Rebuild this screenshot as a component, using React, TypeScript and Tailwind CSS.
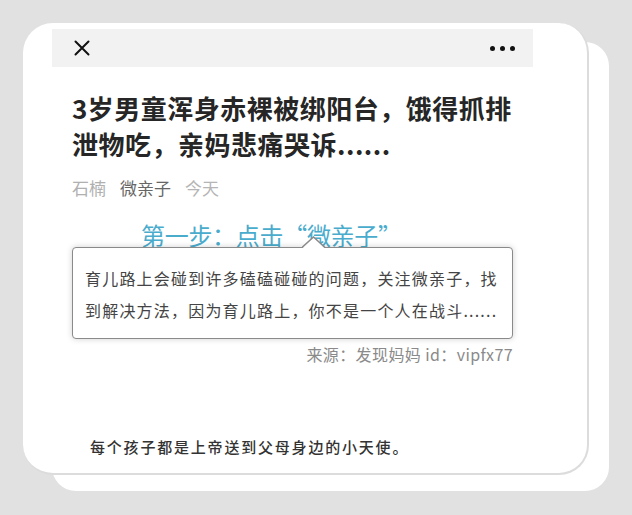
export default function App() {
  const cjk = { fontFamily: '"Noto Sans CJK SC", "Noto Sans", sans-serif' };

  return (
    <div
      className="relative w-[632px] h-[515px] overflow-hidden bg-[#e1e1e1] pl-[23px] pt-[23px]"
      style={cjk}
    >
      {/* back card */}
      <div className="absolute left-[52px] top-[42px] w-[557px] h-[449px] rounded-[24px] bg-white" />

      {/* front card */}
      <div className="relative w-[566px] h-[452px] rounded-[30px] bg-white border-r-2 border-b-2 border-[#dcdcdc] pl-[29px] pt-[6px]">
        <div className="w-[481px] flex flex-col">
          <div className="h-[38px] bg-[#f2f2f2] flex items-center justify-between pl-[22px] pr-[18px]">
            <svg width="16" height="16" viewBox="0 0 16 16">
              <path d="M1.5 1.5 L14.5 14.5 M14.5 1.5 L1.5 14.5" stroke="#111" strokeWidth="2" strokeLinecap="round" />
            </svg>
            <div className="flex gap-[5px]">
              <span className="w-[5px] h-[5px] rounded-full bg-[#111]" />
              <span className="w-[5px] h-[5px] rounded-full bg-[#111]" />
              <span className="w-[5px] h-[5px] rounded-full bg-[#111]" />
            </div>
          </div>

          <h1 className="mt-[23px] pl-[20px] pr-[16px] text-[26px] leading-[36px] font-bold text-[#262626] tracking-[0.5px]">
            3岁男童浑身赤裸被绑阳台，饿得抓排泄物吃，亲妈悲痛哭诉......
          </h1>

          <div className="mt-[14px] pl-[20px] flex gap-[14px] text-[17px] leading-[24px]">
            <span className="text-[#b0b0b0]">石楠</span>
            <span className="text-[#666]">微亲子</span>
            <span className="text-[#b5b5b5]">今天</span>
          </div>

          <div className="mt-[22px] pl-[89px] text-[24px] leading-[26px] text-[#4aaccd] tracking-[-0.3px]">
            第一步：点击“微亲子”
          </div>

          <div className="relative mt-[-1px] ml-[20px] w-[441px] rounded-[4px] border-[1.5px] border-[#8a8a8a] bg-white shadow-[0_0_6px_rgba(0,0,0,0.18)] pl-[12px] pt-[14px] pb-[12px] text-[16px] leading-[32px] tracking-[1.2px] text-[#444]">
            <svg className="absolute left-[229px] top-[-12px]" width="24" height="13" viewBox="0 0 24 13">
              <path d="M0 12.5 L11.5 1 L23 12.5 Z" fill="white" />
              <path d="M0 11.5 L11.5 1 L23 11.5" fill="none" stroke="#8a8a8a" strokeWidth="1.5" />
            </svg>
            <p className="whitespace-nowrap">育儿路上会碰到许多磕磕碰碰的问题，关注微亲子，找</p>
            <p className="whitespace-nowrap">到解决方法，因为育儿路上，你不是一个人在战斗......</p>
          </div>

          <div className="mt-[4px] pr-[20px] text-right text-[16px] leading-[22px] text-[#8a8a8a] tracking-[0.4px]">
            来源：发现妈妈 id：vipfx77
          </div>

          <div className="mt-[71px] pl-[38px] text-[15px] leading-[22px] font-medium text-[#333] tracking-[1.8px]">
            每个孩子都是上帝送到父母身边的小天使。
          </div>
        </div>
      </div>
    </div>
  );
}
